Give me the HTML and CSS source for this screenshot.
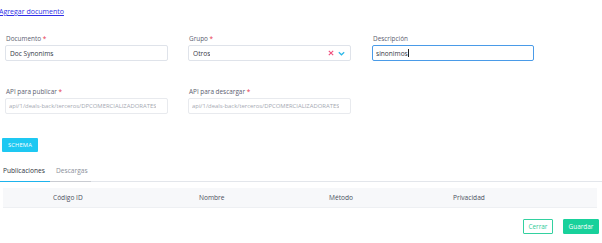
FILE: index.html
```html
<!DOCTYPE html>
<html lang="es">
<head>
<meta charset="utf-8">
<title>Agregar documento</title>
<link rel="stylesheet" href="styles.css">
</head>
<body>
<div class="page">
  <a class="back-link" href="#">Agregar documento</a>

  <div class="form-row">
    <div class="field">
      <label class="label">Documento <span class="req">*</span></label>
      <div class="input"><span class="value">Doc Synonims</span></div>
    </div>
    <div class="field">
      <label class="label">Grupo <span class="req">*</span></label>
      <div class="input select">
        <span class="value">Otros</span>
        <span class="select-icons">
          <svg class="icon-clear" width="6" height="6" viewBox="0 0 6 6"><path d="M0.8 0.8L5.2 5.2M5.2 0.8L0.8 5.2" stroke="#f0507e" stroke-width="1.1" fill="none"/></svg>
          <svg class="icon-chevron" width="7" height="5" viewBox="0 0 7 5"><path d="M0.8 1.2L3.5 3.8L6.2 1.2" stroke="#2ab7e8" stroke-width="1.2" fill="none"/></svg>
        </span>
      </div>
    </div>
    <div class="field">
      <label class="label">Descripción</label>
      <div class="input focused"><span class="value">sinonimos</span><span class="caret"></span></div>
    </div>
  </div>

  <div class="form-row second">
    <div class="field">
      <label class="label">API para publicar <span class="req">*</span></label>
      <div class="input disabled"><span class="value">api/1/deals-back/terceros/DPCOMERCIALIZADORATES</span></div>
    </div>
    <div class="field">
      <label class="label">API para descargar <span class="req">*</span></label>
      <div class="input disabled"><span class="value">api/1/deals-back/terceros/DPCOMERCIALIZADORATES</span></div>
    </div>
  </div>

  <button class="btn-schema">SCHEMA</button>

  <div class="tabs">
    <div class="tab active">Publicaciones</div>
    <div class="tab inactive">Descargas</div>
  </div>

  <div class="table-head">
    <span>Código ID</span>
    <span>Nombre</span>
    <span>Método</span>
    <span>Privacidad</span>
  </div>

  <div class="actions">
    <button class="btn btn-outline">Cerrar</button>
    <button class="btn btn-primary">Guardar</button>
  </div>
</div>
</body>
</html>
```

FILE: styles.css
```css
* { box-sizing: border-box; }
html, body { margin: 0; padding: 0; background: #ffffff; }
body {
  font-family: "Open Sans", "DejaVu Sans", sans-serif;
  color: #3c4150;
  width: 602px;
  height: 243px;
  overflow: hidden;
}
.page {
  padding: 0;
}
.back-link {
  display: block;
  margin: 7px 0 0 -1px;
  font-size: 7px;
  line-height: 9px;
  color: #2f2fe6;
  text-decoration: underline;
  width: max-content;
}
.form-row {
  display: grid;
  grid-template-columns: 163px 163px 163px;
  column-gap: 20px;
  margin: 19px 0 0 5px;
}
.form-row .field:nth-child(3) { margin-left: 1px; }
.form-row.second { margin-top: 27px; }
.field {
  display: flex;
  flex-direction: column;
}
.label {
  font-size: 6.4px;
  line-height: 8px;
  color: #5b6070;
  padding-left: 1px;
  margin-bottom: 2px;
}
.req { color: #e8384f; }
.input {
  height: 16px;
  border: 1px solid #dfe3ea;
  border-radius: 2px;
  display: flex;
  align-items: center;
  padding: 0 4px;
  font-size: 6.6px;
  color: #333843;
  white-space: nowrap;
  overflow: hidden;
  background: #fff;
}
.input .value { overflow: hidden; }
.input.select { justify-content: space-between; }
.select-icons {
  display: flex;
  align-items: center;
  gap: 4px;
  padding-right: 1px;
}
.input.focused {
  border: 1.5px solid #4a9be8;
  padding-left: 3px;
}
.caret {
  display: inline-block;
  width: 1px;
  height: 8px;
  background: #222;
}
.input.disabled {
  color: #a5a9b2;
  border-color: #e8eaee;
  font-size: 5.9px;
  padding: 0 2px 0 3px;
}
.btn-schema {
  display: block;
  margin: 24px 0 0 2px;
  width: 36px;
  height: 14px;
  border: none;
  border-radius: 1px;
  background: #1ec8f2;
  color: #ffffff;
  font-family: inherit;
  font-size: 5.8px;
  letter-spacing: 0.1px;
  padding: 0;
}
.tabs {
  display: flex;
  margin-top: 14px;
  border-bottom: 1px solid #e3e6eb;
}
.tab {
  font-size: 6.6px;
  line-height: 9px;
  padding: 0 0 6px 3px;
  margin-bottom: -1px;
}
.tab.active {
  width: 50px;
  color: #2e3340;
  border-bottom: 1px solid #1eb3ec;
}
.tab.inactive {
  width: 41px;
  color: #8a8f9a;
  padding-left: 6px;
  border-bottom: 1px solid #c9ccd2;
}
.table-head {
  display: grid;
  grid-template-columns: 146px 130px 124px 1fr;
  margin: 6px 5px 0 3px;
  height: 20px;
  align-items: center;
  padding-left: 50px;
  background: #f7f8fa;
  border-bottom: 1px solid #eef0f3;
  font-size: 6.6px;
  color: #4b5060;
}
.actions {
  display: flex;
  justify-content: flex-end;
  gap: 10px;
  margin: 11px 3px 0 0;
}
.btn {
  height: 15px;
  font-family: inherit;
  font-size: 6.4px;
  border-radius: 1px;
  padding: 0;
}
.btn-outline {
  width: 30px;
  background: #fff;
  border: 1px solid #33d1a0;
  color: #2ccb98;
}
.btn-primary {
  width: 36px;
  background: #18d19b;
  border: 1px solid #18d19b;
  color: #ffffff;
}
```
